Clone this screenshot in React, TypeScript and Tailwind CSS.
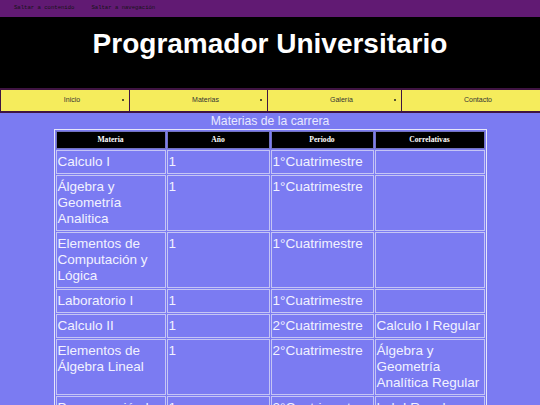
import React from "react";

const rows: [string, string, string, string][] = [
  ["Calculo I", "1", "1°Cuatrimestre", ""],
  ["Álgebra y Geometría Analitica", "1", "1°Cuatrimestre", ""],
  ["Elementos de Computación y Lógica", "1", "1°Cuatrimestre", ""],
  ["Laboratorio I", "1", "1°Cuatrimestre", ""],
  ["Calculo II", "1", "2°Cuatrimestre", "Calculo I Regular"],
  ["Elementos de Álgebra Lineal", "1", "2°Cuatrimestre", "Álgebra y Geometría Analítica Regular"],
  ["Programación I", "1", "2°Cuatrimestre", "Lab I Regular"],
];

const nav = [
  { label: "Inicio", w: "w-[129px]", bullet: true },
  { label: "Materias", w: "w-[138px]", bullet: true },
  { label: "Galería", w: "w-[134px]", bullet: true },
  { label: "Contacto", w: "flex-1", bullet: false },
];

export default function App() {
  return (
    <div className="min-h-[405px] bg-[#7b7bf2] font-['Liberation_Sans',Arial,sans-serif]">
      <div className="h-[17px] bg-[#611a73] flex items-center gap-[17px] pl-[14px] font-['Liberation_Mono',monospace] text-[5.6px] text-[#151515]">
        <span>Saltar a contenido</span>
        <span>Saltar a navegación</span>
      </div>
      <header className="h-[71px] bg-black flex justify-center pt-[11px]">
        <h1 className="text-white font-bold text-[28px] leading-[32px]">Programador Universitario</h1>
      </header>
      <nav className="flex h-[25px] border-y-2 border-[#3f1442] bg-[#f5ec5c] text-[7px] text-[#333]">
        {nav.map((n) => (
          <div key={n.label} className={`${n.w} relative flex items-center justify-center pl-[14px] border-l border-[#3f1442]`}>
            <span>{n.label}</span>
            {n.bullet && (
              <span className="absolute right-[5px] top-[9px] w-[2px] h-[2px] rounded-full bg-[#222]" />
            )}
          </div>
        ))}
      </nav>
      <table className="mx-auto table-fixed w-[433px] border-separate border-spacing-[1px] border border-[#e6e6fb] text-[#f2f2ff]">
        <caption className="text-[12.2px] leading-[16px] text-[#e8e8ff]">Materias de la carrera</caption>
        <colgroup>
          <col className="w-[110px]" />
          <col className="w-[103px]" />
          <col className="w-[103px]" />
          <col className="w-[110px]" />
        </colgroup>
        <thead>
          <tr>
            {["Materia", "Año", "Periodo", "Correlativas"].map((h) => (
              <th
                key={h}
                className="bg-black border border-[#7373c0] h-[18px] p-0 text-center font-['Liberation_Serif',serif] font-bold text-[7.6px] leading-[16px] text-white"
              >
                {h}
              </th>
            ))}
          </tr>
        </thead>
        <tbody>
          {rows.map((r, i) => (
            <tr key={i}>
              {r.map((c, j) => (
                <td
                  key={j}
                  className="border border-[#c5c5f5] align-top px-[1px] pt-[3px] pb-[3px] text-[13.5px] leading-[16px]"
                >
                  {c}
                </td>
              ))}
            </tr>
          ))}
        </tbody>
      </table>
    </div>
  );
}
